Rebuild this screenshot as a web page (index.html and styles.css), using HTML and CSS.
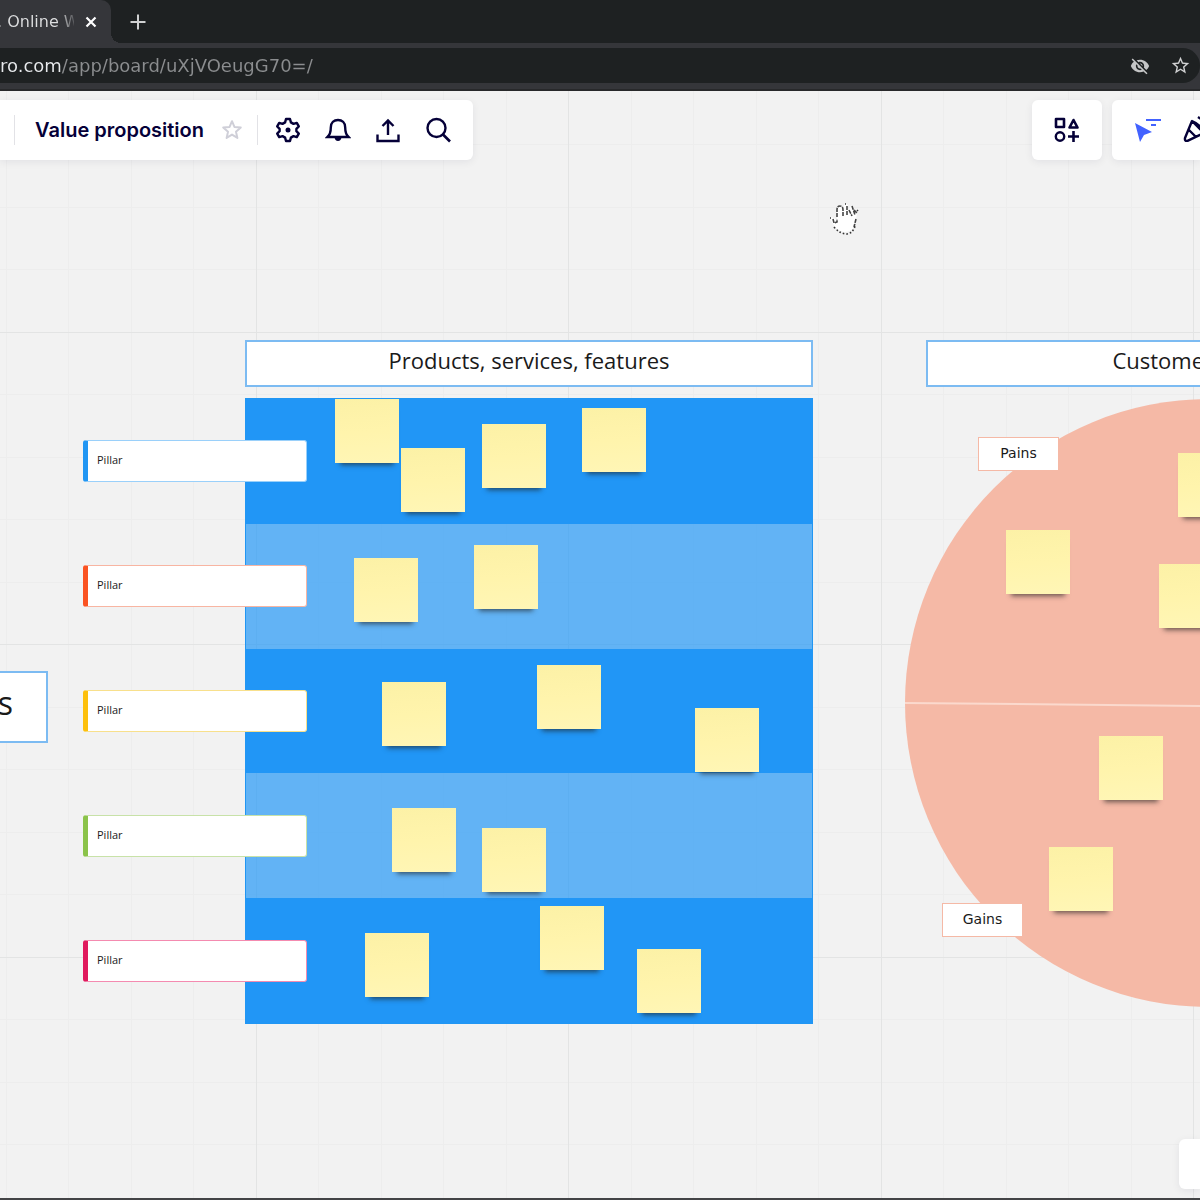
FILE: index.html
```html
<!DOCTYPE html>
<html lang="en">
<head>
    <meta charset="UTF-8">
    <title>Value proposition, Online Whiteboard</title>
    <link rel="stylesheet" href="styles.css">
</head>
<body>
    <header class="browser">
        <div class="tabs">
            <div class="tab">
                <span class="tab-title">. Online W</span>
                <button type="button" class="tab-btn" aria-label="Close tab">
                    <svg width="12" height="12" viewBox="0 0 12 12"><path d="M1.5 1.5l9 9M10.5 1.5l-9 9" stroke="#fff" stroke-width="2.2"/></svg>
                </button>
            </div>
            <button type="button" class="new-tab" aria-label="New tab">
                <svg width="16" height="16" viewBox="0 0 16 16"><path d="M8 .5v15M.5 8h15" stroke="#d0d1d2" stroke-width="2"/></svg>
            </button>
        </div>
        <div class="address">
            <input class="url" type="text" aria-label="Address" value="ro.com/app/board/uXjVOeugG70=/">
            <button type="button" class="address-btn" aria-label="Third-party cookies blocked">
                <svg width="20" height="20" viewBox="0 0 24 24" fill="#c4c5c6"><path d="M12 7c2.76 0 5 2.24 5 5 0 .65-.13 1.26-.36 1.83l2.92 2.92c1.51-1.26 2.7-2.89 3.43-4.75-1.73-4.39-6-7.5-11-7.5-1.4 0-2.74.25-3.98.7l2.16 2.16C10.74 7.13 11.35 7 12 7zM2 4.27l2.28 2.28.46.46C3.08 8.3 1.78 10.02 1 12c1.73 4.39 6 7.5 11 7.5 1.55 0 3.03-.3 4.38-.84l.42.42L19.73 22 21 20.73 3.27 3 2 4.27zM7.53 9.8l1.55 1.55c-.05.21-.08.43-.08.65 0 1.66 1.34 3 3 3 .22 0 .44-.03.65-.08l1.55 1.55c-.67.33-1.41.53-2.2.53-2.76 0-5-2.24-5-5 0-.79.2-1.53.53-2.2zm4.31-.78l3.15 3.15.02-.16c0-1.66-1.34-3-3-3l-.17.01z"/></svg>
            </button>
            <button type="button" class="address-btn" aria-label="Bookmark this page">
                <svg width="21" height="21" viewBox="0 0 24 24" fill="#d0d1d2"><path d="M22 9.24l-7.19-.62L12 2 9.19 8.63 2 9.24l5.46 4.73L5.82 21 12 17.27 18.18 21l-1.63-7.03L22 9.24zM12 15.4l-3.76 2.27 1-4.28-3.32-2.88 4.38-.38L12 6.1l1.71 4.04 4.38.38-3.32 2.88 1 4.28L12 15.4z"/></svg>
            </button>
        </div>
    </header>

    <main class="board">
        <svg class="grid" width="100%" height="100%" aria-hidden="true">
            <defs>
                <pattern id="grid" x="256" y="241" width="625" height="625" patternUnits="userSpaceOnUse">
                    <path d="M62 0h1v625h-1zM125 0h1v625h-1zM187 0h1v625h-1zM250 0h1v625h-1zM375 0h1v625h-1zM437 0h1v625h-1zM500 0h1v625h-1zM562 0h1v625h-1z" fill="#ededed"/>
                    <path d="M0 62h625v1h-625zM0 125h625v1h-625zM0 187h625v1h-625zM0 250h625v1h-625zM0 375h625v1h-625zM0 437h625v1h-625zM0 500h625v1h-625zM0 562h625v1h-625z" fill="#ededed"/>
                    <path d="M0 0h1v625h-1zM312 0h1v625h-1zM0 0h625v1h-625zM0 312h625v1h-625z" fill="#e3e4e4"/>
                </pattern>
            </defs>
            <rect width="100%" height="100%" fill="url(#grid)"/>
        </svg>

        <!-- canvas -->
        <div class="box box-goals">Goals</div>
        <h2 class="box box-products">Products, services, features</h2>
        <h2 class="box box-customer">Customer segment</h2>

        <div class="stripes">
            <div class="stripe"></div>
            <div class="stripe light"></div>
            <div class="stripe"></div>
            <div class="stripe light"></div>
            <div class="stripe"></div>
        </div>

        <div class="pillars">
            <div class="pillar blue">Pillar</div>
            <div class="pillar orange">Pillar</div>
            <div class="pillar yellow">Pillar</div>
            <div class="pillar green">Pillar</div>
            <div class="pillar pink">Pillar</div>
        </div>

        <svg class="circle" width="608" height="608" viewBox="0 0 608 608" aria-hidden="true">
            <circle cx="304" cy="304" r="304" fill="#f5b9a6"/>
            <path d="M0 304L608 310" stroke="#fbd9cd" stroke-width="2"/>
        </svg>
        <div class="tag tag-pains">Pains</div>
        <div class="tag tag-gains">Gains</div>

        <div class="note n1"></div>
        <div class="note n2"></div>
        <div class="note n3"></div>
        <div class="note n4"></div>
        <div class="note n5"></div>
        <div class="note n6"></div>
        <div class="note n7"></div>
        <div class="note n8"></div>
        <div class="note n9"></div>
        <div class="note n10"></div>
        <div class="note n11"></div>
        <div class="note n12"></div>
        <div class="note n13"></div>
        <div class="note n14"></div>
        <div class="note n15"></div>
        <div class="note n16"></div>
        <div class="note n17"></div>
        <div class="note n18"></div>
        <div class="note n19"></div>

        <svg class="hand" width="32" height="34" viewBox="0 0 32 34" aria-hidden="true">
            <path d="M8 18V8q0-4 3-4t3 4v2l1-7q2-2 4 0v6l2-4q3-2 4 1l-1 5 2-2q3 0 2 3l-2 9q-1 8-9 9-7 0-11-5l-5-8q0-3 4-1z" fill="#fff"/>
            <path d="M8 15V8q0-4 3-4t3 4v6M18 4v10M20 8l3 6M23 4l3 9M25 8l3 3M27 17l-2 8M4 17l1 4 3-1v-3" fill="none" stroke="#444" stroke-width="1.6" stroke-dasharray="4 1"/>
            <path d="M1 16h1M16 2h1M28 8l1 1M5 25q6 7 13 7 6-1 8-8" fill="none" stroke="#333" stroke-width="1.6" stroke-dasharray="1.6 2"/>
        </svg>

        <!-- toolbars -->
        <div class="panel toolbar-left">
            <span class="divider"></span>
            <h1 class="board-name">Value proposition</h1>
            <button type="button" class="star-btn" aria-label="Star this board">
                <svg width="22" height="22" viewBox="0 0 20 20"><path d="M10 2l2.2 5.2 5.8.5-4.4 3.8 1.3 5.7-4.9-3-4.9 3 1.3-5.7L2 7.7l5.8-.5z" fill="none" stroke="#cfcfd8" stroke-width="1.8" stroke-linejoin="round"/></svg>
            </button>
            <span class="divider"></span>
            <button type="button" class="tool" aria-label="Settings">
                <svg width="26" height="26" viewBox="0 0 26 26"><path d="M11 2h4l.9 3.4 2.6 1.5 3.3-1 2 3.5-2.4 2.4v2.4l2.4 2.4-2 3.5-3.3-1-2.6 1.500L15 24h-4l-.9-3.400-2.600-1.500-3.300 1-2-3.500 2.400-2.400v-2.400L2.200 9.400l2-3.500 3.300 1 2.600-1.500z" fill="none" stroke="#050038" stroke-width="2.4" stroke-linejoin="round"/><circle cx="13" cy="13" r="2.5" fill="#050038"/></svg>
            </button>
            <button type="button" class="tool" aria-label="Notifications">
                <svg width="26" height="26" viewBox="0 0 26 26"><path d="M2.500 20c2.700-2.500 3.300-4.500 3.300-9.500C5.800 5.500 9 3 13 3s7.200 2.500 7.200 7.500c0 5 .6 7 3.300 9.500z" fill="none" stroke="#050038" stroke-width="2.4"/><path d="M9.500 20h7q-.4 4-3.500 4t-3.500-4z" fill="#050038"/></svg>
            </button>
            <button type="button" class="tool" aria-label="Export">
                <svg width="26" height="26" viewBox="0 0 26 26"><path d="M13 18V4M7.500 9L13 3.500 18.500 9M2.500 17.500V24h21v-6.500" fill="none" stroke="#050038" stroke-width="2.4"/></svg>
            </button>
            <button type="button" class="tool" aria-label="Search">
                <svg width="26" height="26" viewBox="0 0 26 26"><circle cx="11.5" cy="11" r="9" fill="none" stroke="#050038" stroke-width="2.4"/><path d="M18 17.500l7 7" stroke="#050038" stroke-width="2.6"/></svg>
            </button>
        </div>

        <div class="toolbar-right">
            <div class="panel">
                <button type="button" class="apps" aria-label="Apps">
                    <svg width="26" height="26" viewBox="0 0 26 26"><path d="M2 2h8v8H2zM19.500 3l4 7.500h-8z" fill="none" stroke="#050038" stroke-width="2.6" stroke-linejoin="round"/><circle cx="6" cy="19.5" r="4.2" fill="none" stroke="#050038" stroke-width="2.4"/><path d="M19.500 14v11M14 19.500h11" stroke="#050038" stroke-width="2.6"/></svg>
                </button>
            </div>
            <div class="panel panel-cut">
                <button type="button" class="tool" aria-label="Cursors">
                    <svg width="28" height="26" viewBox="0 0 28 26" fill="#4262ff"><path d="M2 6l17 9-8 3-4 7z"/><path d="M13 2h15v2H13zM18 7h5v2h-5z"/></svg>
                </button>
                <button type="button" class="tool" aria-label="Reactions">
                    <svg width="32" height="28" viewBox="0 0 32 28" fill="none" stroke="#050038" stroke-width="2.4" stroke-linejoin="round"><path d="M11 5L4 22q-.6 3.500 2.500 2.800L23 17zM11 5q8 3 12 12M8 14l7 7M17 1l3 2M27 6l-3 4"/></svg>
                </button>
            </div>
        </div>

        <div class="panel zoom-bar"></div>
    </main>
</body>
</html>
```
FILE: styles.css
```css
* { box-sizing: border-box; }
body { margin: 0; height: 100vh; display: flex; flex-direction: column; font-family: "Open Sans", "Noto Sans", sans-serif; background: #f2f2f2; color: #1a1a1a; }
button { border: 0; padding: 0; background: none; display: flex; align-items: center; justify-content: center; }
h1, h2 { margin: 0; font-weight: normal; }

/* browser bar */
.browser { background: #35363a; border-bottom: 2px solid #28292b; font-family: "DejaVu Sans", sans-serif; }
.tabs { display: flex; height: 43px; background: #1e2122; }
.tab { position: relative; display: flex; align-items: center; width: 111px; background: #35363a; border-radius: 0 10px 0 0; }
.tab::after { content: ""; position: absolute; left: 100%; bottom: 0; width: 10px; height: 10px; background: radial-gradient(circle at 100% 0, #1e2122 10px, #35363a 10px); }
.tab-title { width: 74px; overflow: hidden; white-space: nowrap; font-size: 16px; text-indent: -3px; background: linear-gradient(to right, #dfe0e1 58px, #35363a 78px); -webkit-background-clip: text; background-clip: text; color: transparent; }
.tab-btn { width: 34px; height: 34px; }
.new-tab { width: 54px; }
.address { display: flex; align-items: center; height: 35px; margin: 5px 0 6px; background: #1e2122; border-radius: 0 18px 18px 0; }
.url { flex: 1; min-width: 0; height: 35px; padding: 0; border: 0; outline: 0; font-family: "DejaVu Sans", sans-serif; font-size: 18px; background: linear-gradient(to right, #e8eaed 62px, #8b8d8f 62px); -webkit-background-clip: text; background-clip: text; color: transparent; }
.address-btn { width: 40px; height: 35px; }

/* board */
.board { position: relative; flex: 1; overflow: hidden; border-bottom: 2px solid #434446; }
.grid { position: absolute; top: 0; left: 0; }

.box { position: absolute; background: #fff; border: 2px solid #7cbbf2; text-align: center; white-space: nowrap; }
.box-products, .box-customer { top: 249px; width: 568px; height: 47px; font-size: 22px; line-height: 36px; }
.box-products { left: 245px; }
.box-customer { left: 926px; }
.box-goals { top: 580px; left: -108px; width: 156px; height: 72px; padding-right: 33px; text-align: right; font-size: 32px; line-height: 60px; }

.stripes { position: absolute; top: 307px; left: 245px; width: 568px; height: 626px; border: 1px solid #2196f3; display: flex; flex-direction: column; }
.stripe { flex: 1; background: #2196f6; }
.stripe.light { background: rgba(33, 150, 246, 0.69); }

.pillars { position: absolute; top: 349px; left: 83px; display: flex; flex-direction: column; gap: 83px; }
.pillar { width: 224px; height: 42px; padding-left: 9px; background: #fff; border: 1px solid; border-left-width: 5px; border-radius: 3px; font-size: 11px; line-height: 38px; }
.blue { border-color: #9ad0fa #9ad0fa #9ad0fa #2196f3; }
.orange { border-color: #f8b5a2 #f8b5a2 #f8b5a2 #fa5322; }
.yellow { border-color: #f8e08c #f8e08c #f8e08c #fdc00c; }
.green { border-color: #c8e2a8 #c8e2a8 #c8e2a8 #8bc34a; }
.pink { border-color: #f48bb0 #f48bb0 #f48bb0 #e01a5e; }

.circle { position: absolute; top: 308px; left: 905px; }
.tag { position: absolute; width: 81px; height: 34px; background: #fff; border: 1px solid #f5b9a6; text-align: center; font-family: "DejaVu Sans", sans-serif; font-size: 14px; line-height: 30px; }
.tag-pains { top: 346px; left: 978px; }
.tag-gains { top: 812px; left: 942px; }

.note { position: absolute; width: 64px; height: 64px; background: linear-gradient(175deg, #fcf1a6, #fff4ac 50%, #fff6b6); box-shadow: 0 7px 5px -5px rgba(30, 30, 30, 0.65); }
.n1 { top: 308px; left: 335px; }
.n2 { top: 357px; left: 401px; }
.n3 { top: 333px; left: 482px; }
.n4 { top: 317px; left: 582px; }
.n5 { top: 467px; left: 354px; }
.n6 { top: 454px; left: 474px; }
.n7 { top: 591px; left: 382px; }
.n8 { top: 574px; left: 537px; }
.n9 { top: 617px; left: 695px; }
.n10 { top: 717px; left: 392px; }
.n11 { top: 737px; left: 482px; }
.n12 { top: 842px; left: 365px; }
.n13 { top: 815px; left: 540px; }
.n14 { top: 858px; left: 637px; }
.n15 { top: 362px; left: 1178px; }
.n16 { top: 439px; left: 1006px; }
.n17 { top: 473px; left: 1159px; }
.n18 { top: 645px; left: 1099px; }
.n19 { top: 756px; left: 1049px; }

.hand { position: absolute; top: 111px; left: 829px; }

/* toolbars */
.panel { display: flex; align-items: center; height: 60px; background: #fff; border-radius: 6px; box-shadow: 0 2px 8px rgba(5, 0, 56, 0.07); }
.toolbar-left { position: absolute; top: 9px; left: 0; padding: 0 10px 0 14px; border-radius: 0 6px 6px 0; }
.divider { width: 1px; height: 30px; background: #e2e2e6; }
.board-name { margin: 0 3px 0 20px; font-family: Inter, sans-serif; font-size: 20px; font-weight: 600; color: #050038; }
.star-btn { width: 50px; height: 50px; }
.tool { flex: none; width: 50px; height: 50px; }
.toolbar-left .divider + .tool { margin-left: 5px; }
.toolbar-right { position: absolute; top: 9px; right: 0; display: flex; gap: 10px; }
.apps { width: 70px; height: 60px; }
.panel-cut { width: 88px; padding-left: 10px; overflow: hidden; border-radius: 6px 0 0 6px; }
.zoom-bar { position: absolute; right: 0; bottom: 9px; width: 21px; height: 50px; border-radius: 6px 0 0 6px; }
```
